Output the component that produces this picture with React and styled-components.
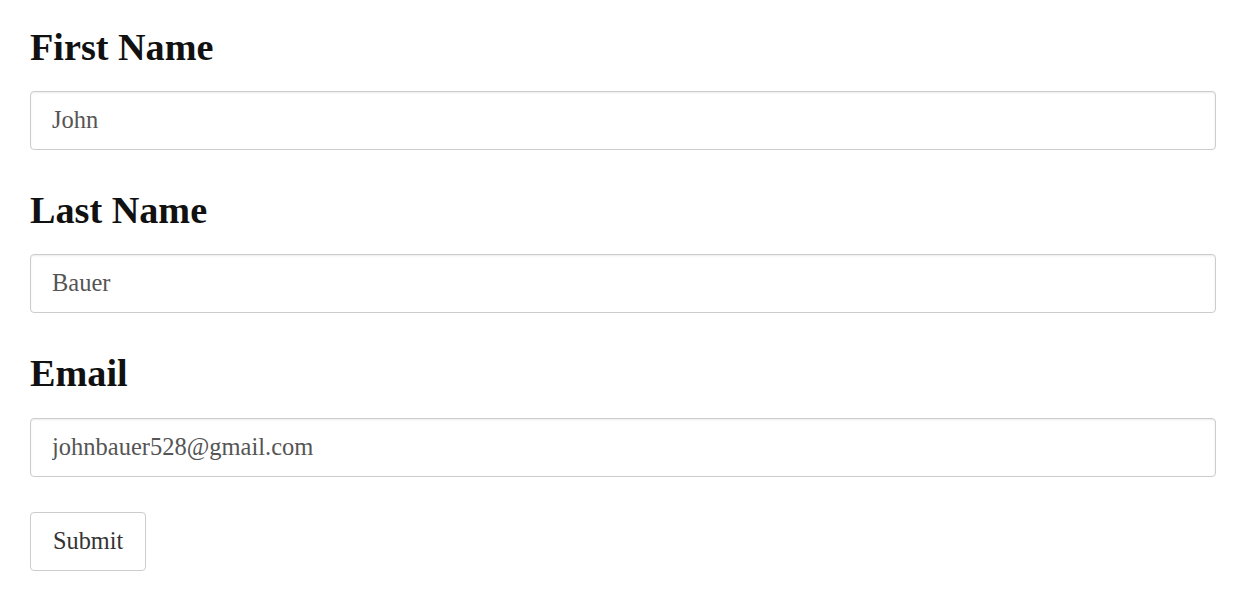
import React, { useState } from "react";
import styled, { createGlobalStyle } from "styled-components";

const GlobalStyle = createGlobalStyle`
  html, body {
    margin: 0;
    padding: 0;
    background: #fff;
  }
  body {
    font-family: "Liberation Serif", "Times New Roman", serif;
  }
`;

const App = () => {
  const [values, setValues] = useState({
    firstName: "John",
    lastName: "Bauer",
    email: "johnbauer528@gmail.com",
  });

  const handleChange = (e) => {
    const { name, value } = e.target;
    setValues({ ...values, [name]: value });
  };

  const handleSubmit = (e) => {
    e.preventDefault();
  };

  return (
    <>
      <GlobalStyle />
      <StForm onSubmit={handleSubmit}>
        <Field>
          <Label htmlFor="firstName">First Name</Label>
          <Input
            id="firstName"
            name="firstName"
            type="text"
            value={values.firstName}
            onChange={handleChange}
          />
        </Field>
        <Field>
          <Label htmlFor="lastName">Last Name</Label>
          <Input
            id="lastName"
            name="lastName"
            type="text"
            value={values.lastName}
            onChange={handleChange}
          />
        </Field>
        <Field>
          <Label htmlFor="email">Email</Label>
          <Input
            id="email"
            name="email"
            type="text"
            value={values.email}
            onChange={handleChange}
          />
        </Field>
        <SubmitButton type="submit">Submit</SubmitButton>
      </StForm>
    </>
  );
};

export default App;

const StForm = styled.form`
  display: flex;
  flex-direction: column;
  align-items: flex-start;
  padding: 24.5px 31px 0 30px;
`;

const Field = styled.div`
  display: flex;
  flex-direction: column;
  width: 100%;
  margin-bottom: 37.8px;

  &:nth-of-type(3) {
    margin-bottom: 35px;
  }
`;

const Label = styled.label`
  display: block;
  font-family: "Liberation Serif", "Times New Roman", serif;
  font-size: 38.2px;
  font-weight: 700;
  line-height: 44px;
  color: #111;
  margin-bottom: 22.5px;
`;

const Input = styled.input`
  box-sizing: border-box;
  width: 100%;
  height: 59px;
  padding: 0 21px 1px;
  font-family: "Liberation Serif", "Times New Roman", serif;
  font-size: 24.5px;
  color: #555;
  background: #fff;
  border: 1px solid #ccc;
  border-radius: 4px;
  box-shadow: inset 0 1px 2px rgba(0, 0, 0, 0.08);
  outline: none;
`;

const SubmitButton = styled.button`
  box-sizing: border-box;
  height: 59px;
  padding: 0 22px;
  font-family: "Liberation Serif", "Times New Roman", serif;
  font-size: 24.3px;
  color: #333;
  background: #fff;
  border: 1px solid #ccc;
  border-radius: 4px;
  cursor: pointer;
`;
